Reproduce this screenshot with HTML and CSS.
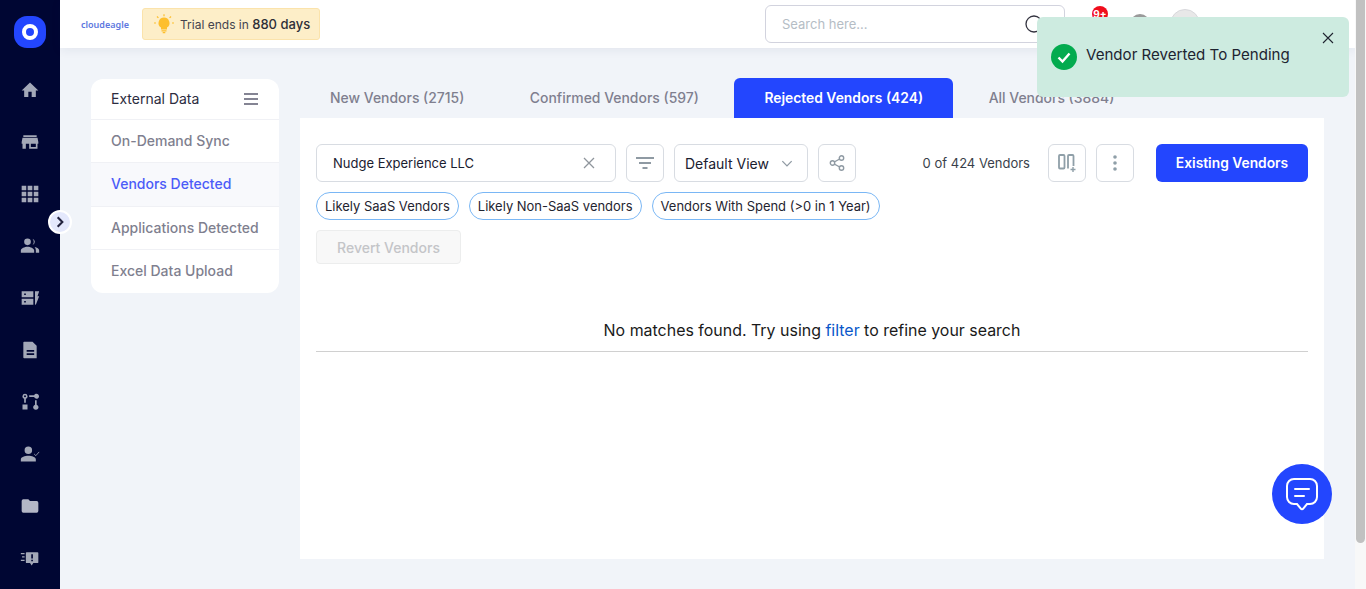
FILE: index.html
```html
<!DOCTYPE html>
<html lang="en">
  <head>
    <meta charset="UTF-8" />
    <title>CloudEagle - Vendors Detected</title>
    <link rel="stylesheet" href="styles.css">
  </head>
  <body>
    <div class="app">
      <!-- Left navigation -->
      <nav class="sidebar">
        <div class="logo"><span class="logo-ring"></span></div>
        <svg class="nav-icon" viewBox="0 0 24 24"><path d="M10 20.500v-6.500h4v6.500h5v-8h3L12 3 2 12.500h3v8z"/></svg>
        <svg class="nav-icon" viewBox="0 0 24 24"><path fill-rule="evenodd" d="M4 4h16v2H4zM3 7h18l1 5v2h-1v6h-10v-6H7v6H3v-6H2v-2zM13 14v4h6v-4z"/></svg>
        <svg class="nav-icon" viewBox="0 0 24 24"><path d="M2 2h5.500v5.500H2zM9.200 2h5.600v5.500H9.200zM16.500 2H22v5.500h-5.500zM2 9.200h5.500v5.600H2zM9.200 9.200h5.600v5.600H9.200zM16.500 9.200H22v5.600h-5.500zM2 16.500h5.500V22H2zM9.200 16.500h5.600V22H9.200zM16.500 16.500H22V22h-5.500z"/></svg>
        <svg class="nav-icon" viewBox="0 0 24 24"><path d="M9 11a4 4 0 1 0 0-8 4 4 0 0 0 0 8zM1 20v-2.500C1 15 5.500 13 9 13s8 2 8 4.500V20zM15 3.200a4 4 0 0 1 0 7.600 6 6 0 0 0 0-7.600zM17.500 13.300c3 .5 5.500 2 5.500 4.200V20h-4v-2.500c0-1.700-.6-3.100-1.500-4.200z"/></svg>
        <svg class="nav-icon" viewBox="0 0 24 24"><path fill-rule="evenodd" d="M2 4h14v7H2zM5 6.500v2h2v-2zM2 13h14v7H2zM5 15.500v2h2v-2zM18 4h5l-2 6h2l-4 10-1-.3z"/></svg>
        <svg class="nav-icon" viewBox="0 0 24 24"><path fill-rule="evenodd" d="M5 2h10l5 5v15H5a1 1 0 0 1-1-1V3a1 1 0 0 1 1-1zM8 12v2h9v-2zM8 16v2h9v-2z"/></svg>
        <svg class="nav-icon" viewBox="0 0 24 24"><path fill-rule="evenodd" d="M6 2a3.200 3.200 0 0 1 1 6.200V13H5V8.200A3.200 3.200 0 0 1 6 2zm0 2a1.200 1.200 0 1 0 0 2.400A1.200 1.200 0 0 0 6 4zM3 15h6v6H3zM11 4h6a3 3 0 1 1 0 2h-6zM18 10h2v5.200a3.200 3.200 0 1 1-2 0z"/></svg>
        <svg class="nav-icon" viewBox="0 0 24 24"><path d="M10 12a4.500 4.500 0 1 0 0-9 4.500 4.500 0 0 0 0 9zM1 21v-2.500C1 15.500 6 14 10 14s9 1.500 9 4.500V21z"/><path d="M17 12l2 2 4-4.500" fill="none" stroke="#a3a8b8" stroke-width="1"/></svg>
        <svg class="nav-icon nav-light" viewBox="0 0 24 24"><path d="M4 4h6l2 2h8a2 2 0 0 1 2 2v10a2 2 0 0 1-2 2H4a2 2 0 0 1-2-2V6a2 2 0 0 1 2-2z"/></svg>
        <svg class="nav-icon" viewBox="0 0 24 24"><path fill-rule="evenodd" d="M8 5h13a1 1 0 0 1 1 1v11a1 1 0 0 1-1 1h-5l-2 3-2-3H8a1 1 0 0 1-1-1V6a1 1 0 0 1 1-1zM13.500 7.500v5h2v-5zM13.500 14v2h2v-2zM1 6h4.500v1.500H1zM2.500 10H5.500v1.500h-3zM1 14h4.500v1.500H1z"/></svg>
      </nav>
      <button class="nav-toggle">
        <svg viewBox="0 0 12 12"><path d="M4 2l4 4-4 4" fill="none" stroke="#23233f" stroke-width="1.800"/></svg>
      </button>

      <div class="page">
        <header class="topbar">
          <span class="brand">cloudeagle</span>
          <div class="trial">
            <svg class="bulb" viewBox="0 0 20 20"><path d="M10 3.500a5.500 5.500 0 0 0-3 10.100V15.500h6v-1.900A5.500 5.500 0 0 0 10 3.500zM7.500 16.300h5v1.100h-5zM8.700 18h2.600v1.200H8.700z" fill="#fdbf2d"/><path d="M10 .2v2M3 2.500l1.400 1.400M17 2.500l-1.400 1.400M0 9h2M18 9h2" stroke="#fdbf2d" stroke-width="1.200" fill="none"/></svg>
            <span class="trial-text">Trial ends in <b>880 days</b></span>
          </div>
          <div class="search-top">
            <span>Search here...</span>
            <svg viewBox="0 0 20 20"><circle cx="10" cy="10" r="8" fill="none" stroke="#33333f" stroke-width="1.300"/></svg>
          </div>
          <div class="top-icons">
            <span class="badge">9+</span>
            <span class="help"></span>
            <span class="avatar"></span>
          </div>
        </header>

        <main class="content">
          <aside class="side-card">
            <div class="side-head">
              <span>External Data</span>
              <svg viewBox="0 0 16 14"><path d="M1 2h14M1 7h14M1 12h14" stroke="#5c5c70" stroke-width="1.700"/></svg>
            </div>
            <a class="side-item">On-Demand Sync</a>
            <a class="side-item active">Vendors Detected</a>
            <a class="side-item">Applications Detected</a>
            <a class="side-item">Excel Data Upload</a>
          </aside>

          <section class="vendors">
            <div class="tabs">
              <div class="tab">New Vendors (2715)</div>
              <div class="tab">Confirmed Vendors (597)</div>
              <div class="tab selected">Rejected Vendors (424)</div>
              <div class="tab">All Vendors (3884)</div>
            </div>
            <div class="panel">
              <div class="toolbar">
                <div class="search-box">
                  <span>Nudge Experience LLC</span>
                  <svg viewBox="0 0 12 12"><path d="M1 1l10 10M11 1L1 11" stroke="#8f959c" stroke-width="1.300"/></svg>
                </div>
                <button class="icon-btn">
                  <svg viewBox="0 0 18 14"><path d="M0 2h18M3 7h12M6.500 12h5" stroke="#8f9aa3" stroke-width="1.800"/></svg>
                </button>
                <div class="view-select">
                  <span>Default View</span>
                  <svg viewBox="0 0 10 6"><path d="M1 1l4 4 4-4" fill="none" stroke="#8f9aa3" stroke-width="1.100"/></svg>
                </div>
                <button class="icon-btn">
                  <svg class="share" viewBox="0 0 16 16"><path d="M12.500 3L3.500 8l9 5" fill="none" stroke="#8f9aa3" stroke-width="1.400"/><circle cx="12.500" cy="3" r="2.200" fill="#fff" stroke="#8f9aa3" stroke-width="1.400"/><circle cx="3.500" cy="8" r="2.200" fill="#fff" stroke="#8f9aa3" stroke-width="1.400"/><circle cx="12.500" cy="13" r="2.200" fill="#fff" stroke="#8f9aa3" stroke-width="1.400"/></svg>
                </button>
                <span class="count">0 of 424 Vendors</span>
                <button class="icon-btn">
                  <svg class="cols" viewBox="0 0 18 18"><rect x="1" y="1" width="5.500" height="13.500" rx="1" fill="none" stroke="#8f9fa8" stroke-width="1.800"/><path d="M10 14.500V2a1 1 0 0 1 1-1h3.500a1 1 0 0 1 1 1v10" fill="none" stroke="#8f9fa8" stroke-width="1.800"/><path d="M15 13v5M12.500 15.500h5" stroke="#8f9fa8" stroke-width="1.400"/></svg>
                </button>
                <button class="icon-btn">
                  <svg class="dots" viewBox="0 0 4 16"><circle cx="2" cy="2" r="1.800"/><circle cx="2" cy="8" r="1.800"/><circle cx="2" cy="14" r="1.800"/></svg>
                </button>
                <button class="primary-btn">Existing Vendors</button>
              </div>
              <div class="chips">
                <span class="chip">Likely SaaS Vendors</span>
                <span class="chip">Likely Non-SaaS vendors</span>
                <span class="chip">Vendors With Spend (&gt;0 in 1 Year)</span>
              </div>
              <button class="revert-btn">Revert Vendors</button>
              <div class="empty">No matches found. Try using <a>filter</a> to refine your search</div>
            </div>
          </section>
        </main>
      </div>

      <div class="scrollbar"><div class="scroll-thumb"></div></div>
    </div>

    <!-- Toast and chat sit over the page -->
    <div class="toast">
      <svg class="toast-check" viewBox="0 0 26 26"><circle cx="13" cy="13" r="13" fill="#03ab4f"/><path d="M7.500 13.500l4 4 7-8" fill="none" stroke="#fff" stroke-width="2.400"/></svg>
      <span class="toast-text">Vendor Reverted To Pending</span>
      <svg class="toast-close" viewBox="0 0 12 12"><path d="M1 1l10 10M11 1L1 11" stroke="#1f2430" stroke-width="1.100"/></svg>
    </div>
    <button class="chat">
      <svg viewBox="0 0 32 34"><path d="M8 2h16a7 7 0 0 1 7 7v11a7 7 0 0 1-7 7h-3l-3.800 4.700a1.500 1.500 0 0 1-2.400 0L11 27H8a7 7 0 0 1-7-7V9a7 7 0 0 1 7-7z" fill="none" stroke="#fff" stroke-width="2"/><path d="M9 12h14M9 19h9" stroke="#fff" stroke-width="2" stroke-linecap="round"/></svg>
    </button>
  </body>
</html>
```

FILE: styles.css
```css
* {
  box-sizing: border-box;
}

html,
body {
  height: 100%;
}

body {
  margin: 0;
  font-family: Inter, "Liberation Sans", sans-serif;
  font-size: 14px;
  color: #1f2430;
  overflow: hidden;
}

button {
  font-family: inherit;
}

.app {
  display: flex;
  height: 589px;
  position: relative;
}

/* sidebar */
.sidebar {
  width: 60px;
  flex: none;
  background: #000633;
  display: flex;
  flex-direction: column;
  align-items: center;
  padding-top: 16px;
  overflow: hidden;
}

.logo {
  width: 32px;
  height: 32px;
  flex: none;
  margin-bottom: 32px;
  border-radius: 13px;
  background: #2346fe;
  display: flex;
  align-items: center;
  justify-content: center;
}

.logo-ring {
  width: 16px;
  height: 16px;
  border-radius: 50%;
  border: 4.500px solid #fff;
}

.nav-icon {
  width: 20px;
  height: 20px;
  fill: #a3a8b8;
  margin-bottom: 32px;
  flex: none;
}

.nav-light {
  fill: #b3b6c6;
}

.nav-toggle {
  position: absolute;
  left: 48px;
  top: 210px;
  width: 24px;
  height: 24px;
  padding: 3px;
  border: 2px solid #fff;
  border-radius: 50%;
  background: #e4e8fc;
  display: flex;
  align-items: center;
  justify-content: center;
}

.nav-toggle svg {
  width: 14px;
  height: 14px;
}

/* header */
.page {
  flex: 1;
  min-width: 0;
  background: #f1f4f9;
  display: flex;
  flex-direction: column;
}

.topbar {
  height: 48px;
  flex: none;
  background: #fff;
  display: flex;
  align-items: center;
  padding-left: 21px;
  box-shadow: 0 2px 10px rgba(30, 40, 80, 0.07);
}

.brand {
  width: 61px;
  font-family: "Noto Sans", sans-serif;
  font-size: 9px;
  font-weight: 600;
  color: #5d78e0;
}

.trial {
  display: flex;
  align-items: center;
  height: 32px;
  padding: 0 10px 0 11px;
  gap: 6px;
  width: 178px;
  background: #fdeec8;
  border: 1px solid #fbe3ab;
  border-radius: 3px;
  color: #44444f;
  white-space: nowrap;
}

.trial-text {
  font-size: 12px;
}

.trial b {
  font-size: 13px;
  font-weight: 500;
  color: #2e2e38;
}

.bulb {
  width: 20px;
  height: 20px;
  flex: none;
}

.search-top {
  margin-left: 445px;
  width: 300px;
  height: 38px;
  border: 1px solid #d2d3de;
  border-radius: 6px;
  display: flex;
  align-items: center;
  justify-content: space-between;
  padding: 0 20px 0 16px;
  color: #b5bdc5;
  font-size: 13px;
}

.search-top svg {
  width: 20px;
  height: 20px;
}

.top-icons {
  display: flex;
  align-items: center;
  margin-left: 27px;
  height: 48px;
}

.badge {
  width: 16px;
  height: 16px;
  border-radius: 50%;
  background: #f00d1c;
  color: #fff;
  font-size: 10px;
  font-weight: 700;
  text-align: center;
  line-height: 16px;
  margin-top: -20px;
}

.help {
  width: 20px;
  height: 20px;
  border-radius: 50%;
  background: #9a9a9a;
  margin-left: 22px;
}

.avatar {
  width: 30px;
  height: 30px;
  border-radius: 50%;
  background: #e8e8e8;
  border: 1px solid #d8d8dc;
  margin-left: 20px;
}

/* main area */
.content {
  flex: 1;
  display: flex;
  align-items: flex-start;
  gap: 21px;
  padding: 30px 0 30px 31px;
  min-height: 0;
}

.side-card {
  width: 188px;
  flex: none;
  margin-top: 1px;
  background: #fff;
  border-radius: 12px;
  overflow: hidden;
}

.side-head {
  height: 41px;
  display: flex;
  align-items: center;
  justify-content: space-between;
  padding: 0 20px 1px;
  color: #2c2c40;
  border-bottom: 1px solid #f0f1f5;
}

.side-head svg {
  width: 16px;
  height: 14px;
}

.side-item {
  display: flex;
  align-items: center;
  height: 43.250px;
  padding: 0 20px 1px;
  color: #7f7f8f;
  font-weight: 500;
  border-bottom: 1px solid #f0f1f5;
}

.side-item:last-child {
  border-bottom: none;
}

.side-item.active {
  color: #4b5cf8;
  background: #f8f9fc;
}

.vendors {
  width: 1024px;
  flex: none;
  display: flex;
  flex-direction: column;
  height: 481px;
}

.tabs {
  display: flex;
  gap: 5.500px;
  height: 40px;
  flex: none;
}

.tab {
  padding: 0 30px 1px;
  display: flex;
  align-items: center;
  font-size: 13.950px;
  font-weight: 500;
  color: #7f7f8f;
  border-radius: 6px 6px 0 0;
  white-space: nowrap;
}

.tab.selected {
  background: #2346fe;
  color: #fff;
  font-size: 13.850px;
  font-weight: 600;
}

.panel {
  flex: 1;
  background: #fff;
  padding: 26px 16px 0;
}

.toolbar {
  display: flex;
  align-items: center;
  height: 38px;
}

.search-box {
  width: 300px;
  height: 38px;
  border: 1px solid #d8dce2;
  border-radius: 6px;
  display: flex;
  align-items: center;
  justify-content: space-between;
  padding: 0 20px 0 16px;
  font-size: 13px;
  color: #1a2030;
}

.search-box svg {
  width: 12px;
  height: 12px;
}

.icon-btn {
  width: 38px;
  height: 38px;
  flex: none;
  padding: 0;
  background: #fff;
  border: 1px solid #d8dce2;
  border-radius: 6px;
  display: flex;
  align-items: center;
  justify-content: center;
  margin-left: 10px;
}

.icon-btn svg {
  width: 18px;
  height: 14px;
}

.icon-btn .share {
  width: 16px;
  height: 16px;
}

.icon-btn .cols {
  width: 18px;
  height: 18px;
}

.icon-btn .dots {
  width: 4px;
  height: 16px;
  fill: #8f9fa8;
}

.view-select {
  width: 134px;
  height: 38px;
  margin-left: 10px;
  border: 1px solid #d8dce2;
  border-radius: 6px;
  display: flex;
  align-items: center;
  justify-content: space-between;
  padding: 0 14px 0 10px;
  color: #1a2030;
}

.view-select svg {
  width: 12px;
  height: 7px;
}

.count {
  margin-left: auto;
  font-size: 13px;
  color: #3a3f4a;
  margin-right: 8px;
}

.primary-btn {
  width: 152px;
  height: 38px;
  margin-left: 22px;
  border: none;
  border-radius: 6px;
  background: #2346fe;
  color: #fff;
  font-size: 13.800px;
  font-weight: 600;
}

.chips {
  display: flex;
  gap: 10px;
  margin-top: 10px;
}

.chip {
  height: 28px;
  padding: 0 8px;
  display: flex;
  align-items: center;
  border: 1px solid #7ab7f5;
  border-radius: 14px;
  font-size: 12.980px;
  color: #1f2430;
  white-space: nowrap;
}

.revert-btn {
  display: block;
  width: 145px;
  height: 34px;
  margin-top: 10px;
  background: #f8f8f8;
  border: 1px solid #eceded;
  border-radius: 4px;
  font-size: 14px;
  font-weight: 500;
  color: #c4c5c8;
}

.empty {
  margin-top: 57px;
  padding-bottom: 11px;
  border-bottom: 1px solid #d0d0d0;
  text-align: center;
  font-size: 15.950px;
  color: #1a1a1a;
}

.empty a {
  color: #0a58ca;
}

.scrollbar {
  width: 11px;
  flex: none;
  background: #f8f8f8;
}

.scroll-thumb {
  height: 543px;
  background: #c1c1c1;
  border-radius: 0 0 5px 5px;
  margin: 0 1px;
}

/* overlays */
.toast {
  position: absolute;
  left: 1037px;
  top: 17px;
  width: 312px;
  height: 80px;
  background: #cdebe0;
  border-radius: 6px;
  display: flex;
  align-items: flex-start;
  padding: 27px 14px;
  gap: 9px;
  color: #1d2430;
}

.toast-text {
  font-size: 15.100px;
  margin-top: 1px;
}

.toast-check {
  width: 26px;
  height: 26px;
  flex: none;
}

.toast-close {
  position: absolute;
  right: 15px;
  top: 15px;
  width: 12px;
  height: 12px;
}

.chat {
  position: absolute;
  left: 1272px;
  top: 464px;
  width: 60px;
  height: 60px;
  padding: 0;
  border: none;
  border-radius: 50%;
  background: #2346fe;
  display: flex;
  align-items: center;
  justify-content: center;
}

.chat svg {
  width: 32px;
  height: 34px;
}
```
